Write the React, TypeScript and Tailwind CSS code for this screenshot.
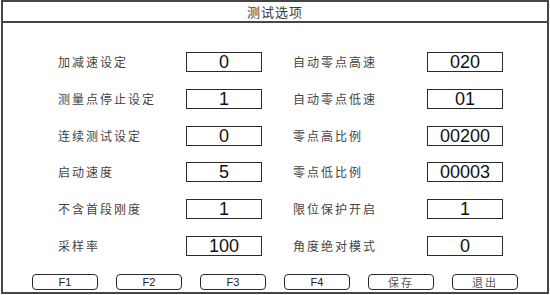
const rows: [string, string, string, string][] = [
  ["加减速设定", "0", "自动零点高速", "020"],
  ["测量点停止设定", "1", "自动零点低速", "01"],
  ["连续测试设定", "0", "零点高比例", "00200"],
  ["启动速度", "5", "零点低比例", "00003"],
  ["不含首段刚度", "1", "限位保护开启", "1"],
  ["采样率", "100", "角度绝对模式", "0"],
];

const buttons = ["F1", "F2", "F3", "F4", "保存", "退出"];

const cjk = "font-['Noto_Sans_CJK_SC',sans-serif]";
const num = "font-['Liberation_Sans',Arial,sans-serif]";

function ValueBox({ value }: { value: string }) {
  return (
    <div
      className={`w-[76px] h-[20px] border-[1.5px] border-[#2b2b2b] flex items-center justify-center text-[18px] leading-none text-[#111] ${num}`}
    >
      {value}
    </div>
  );
}

export default function App() {
  return (
    <div className="w-[550px] h-[295px] bg-white pl-[1px]">
      <div className="w-[548px] h-[294px] border-2 border-[#454545] flex flex-col">
        {/* title bar */}
        <div
          className={`h-[21px] border-b-2 border-[#454545] flex items-center justify-center text-[13px] tracking-[1px] text-[#3a3a3a] ${cjk}`}
        >
          测试选项
        </div>

        {/* settings */}
        <div className="flex flex-col gap-[16.8px] pt-[29px] pl-[55px]">
          {rows.map(([l1, v1, l2, v2]) => (
            <div key={l1} className="flex items-center h-[20px]">
              <div className={`w-[128px] text-[12px] tracking-[2px] text-[#444] ${cjk}`}>{l1}</div>
              <ValueBox value={v1} />
              <div className="w-[31px]" />
              <div className={`w-[134px] text-[12px] tracking-[2px] text-[#444] ${cjk}`}>{l2}</div>
              <ValueBox value={v2} />
            </div>
          ))}
        </div>

        {/* function keys */}
        <div className="mt-auto pb-[2px] pl-[29px] flex gap-[18px]">
          {buttons.map(b => (
            <div
              key={b}
              className={`w-[66px] h-[16px] border-[1.5px] border-[#2b2b2b] rounded-[4px] flex items-center justify-center text-[11px] leading-none ${
                b.startsWith("F") ? `${num} text-[#222]` : `${cjk} tracking-[2px] text-[#555]`
              }`}
            >
              {b}
            </div>
          ))}
        </div>
      </div>
    </div>
  );
}
